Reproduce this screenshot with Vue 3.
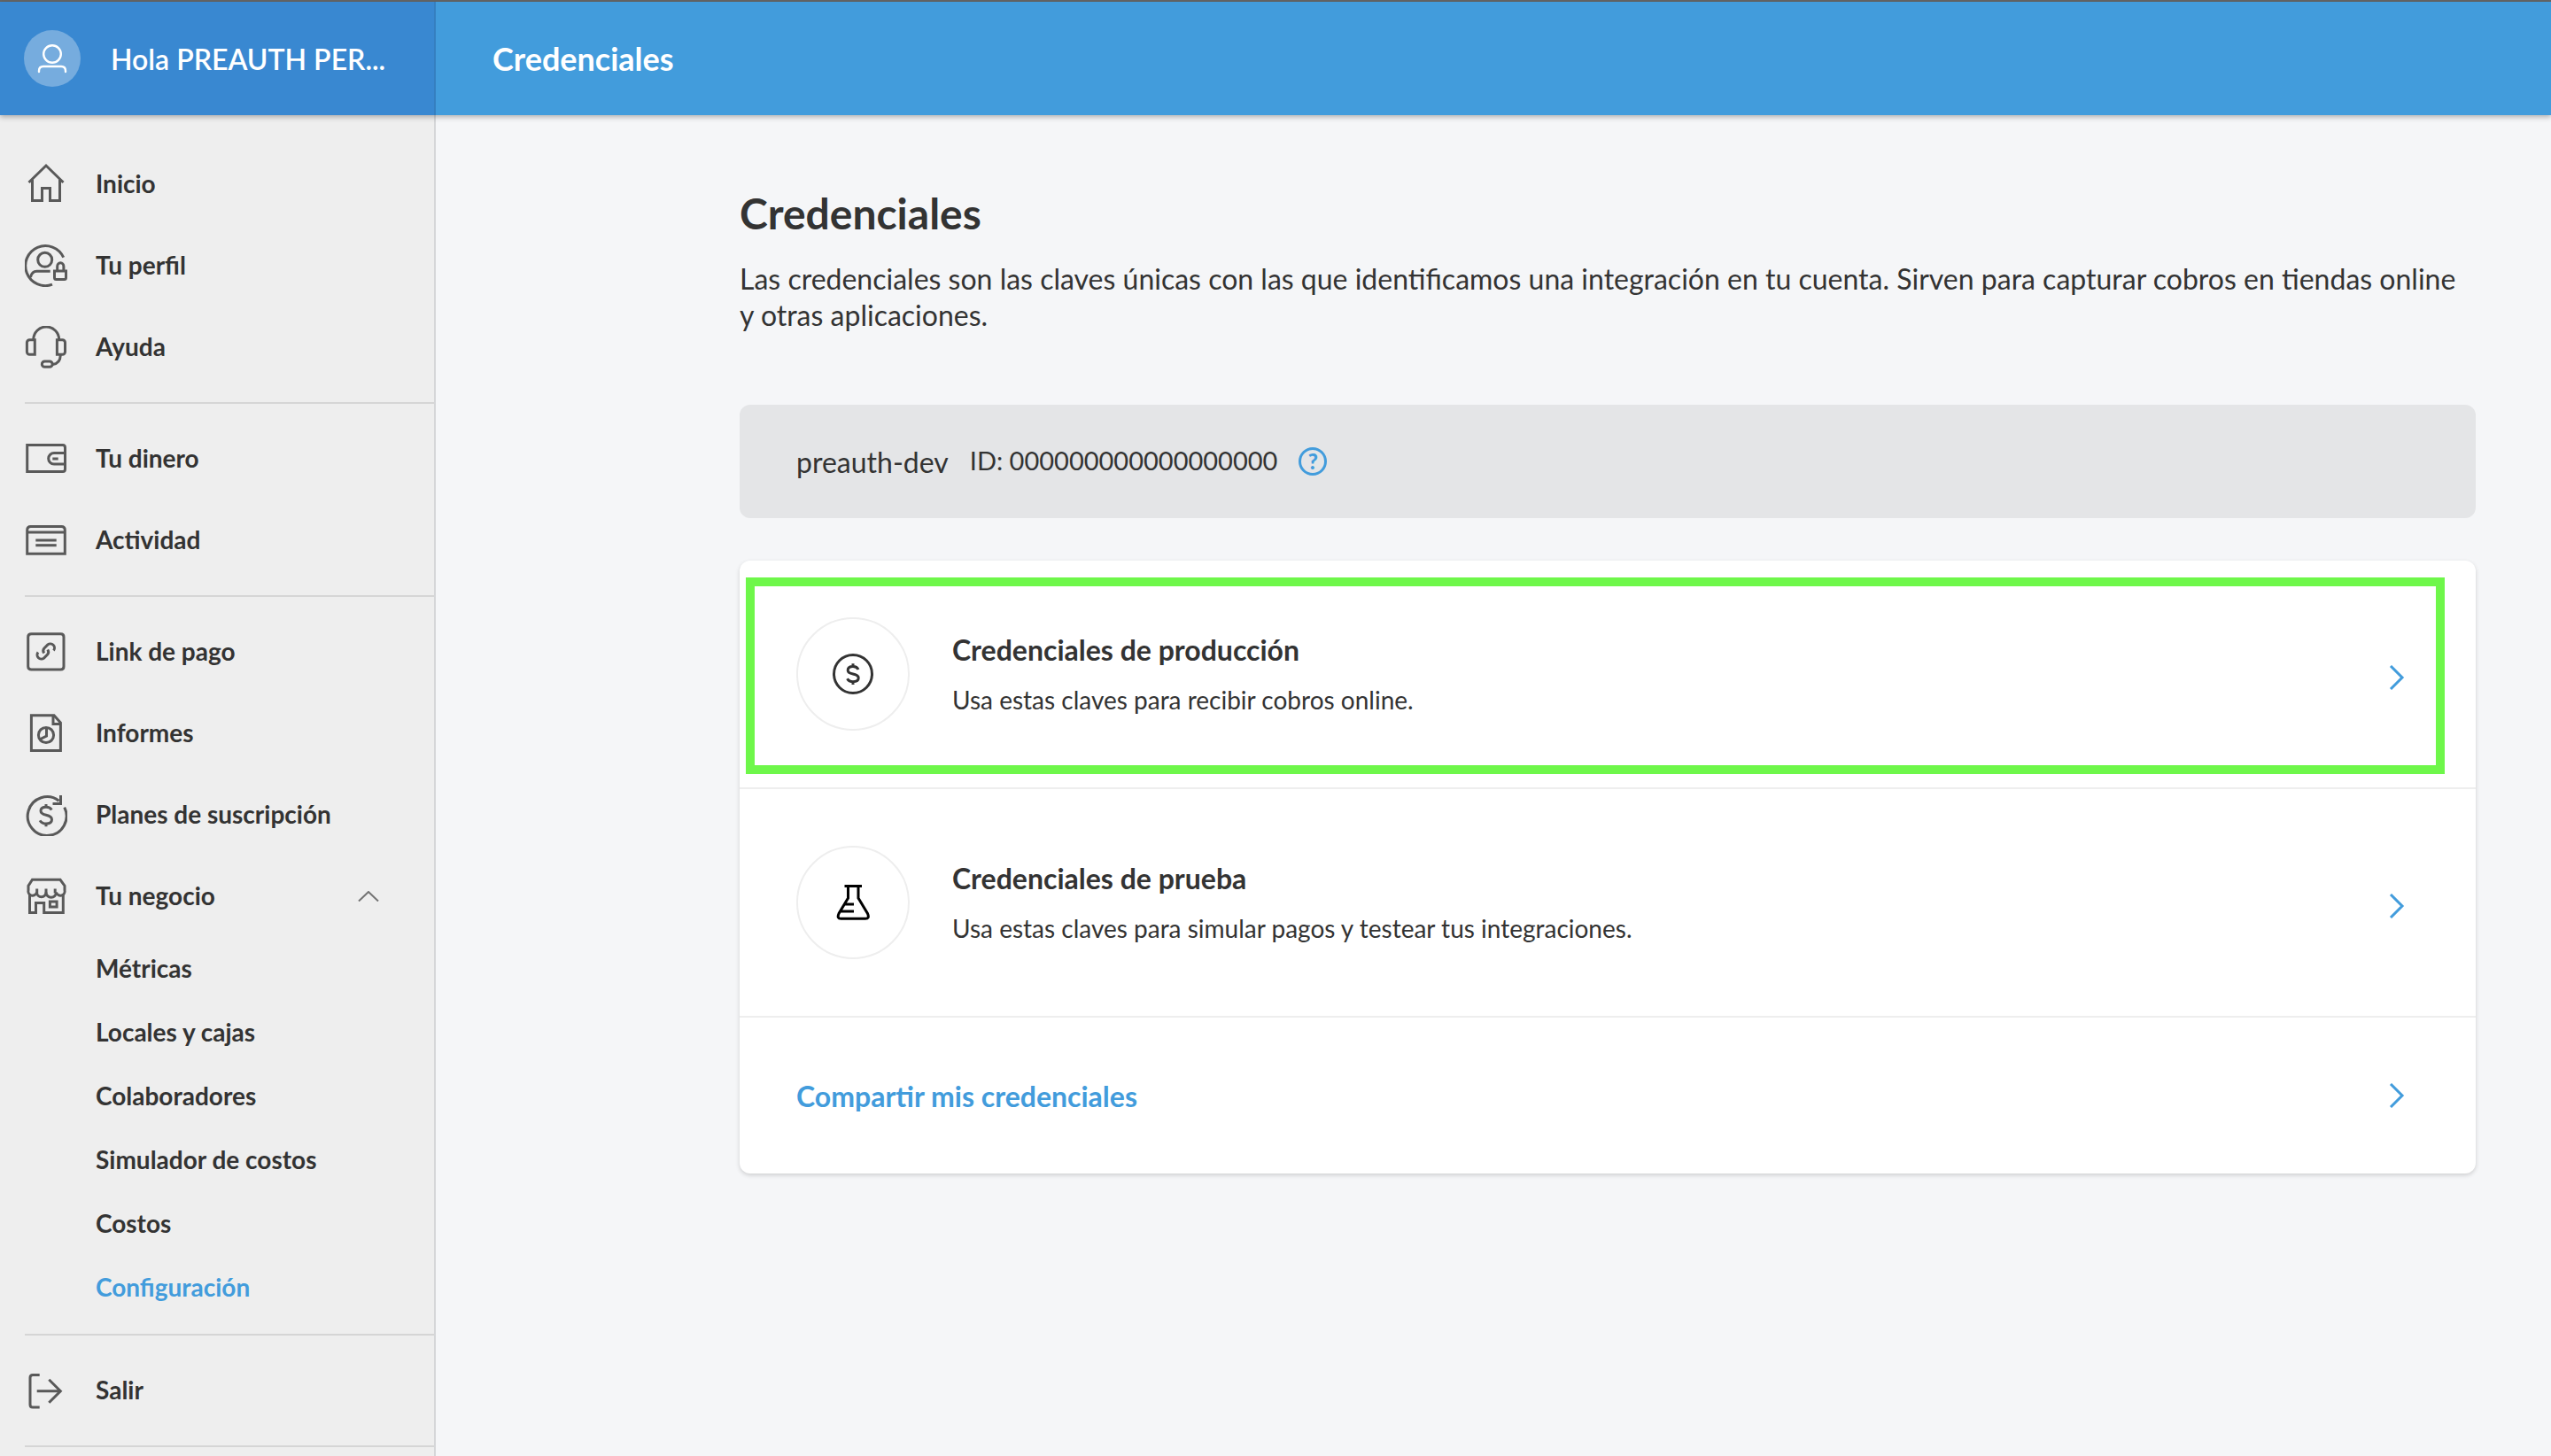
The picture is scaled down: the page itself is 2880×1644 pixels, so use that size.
<script setup>
const groups = [
  [
    { label: 'Inicio', icon: 'home' },
    { label: 'Tu perfil', icon: 'profile' },
    { label: 'Ayuda', icon: 'help' },
  ],
  [
    { label: 'Tu dinero', icon: 'wallet' },
    { label: 'Actividad', icon: 'activity' },
  ],
  [
    { label: 'Link de pago', icon: 'link' },
    { label: 'Informes', icon: 'report' },
    { label: 'Planes de suscripción', icon: 'plans' },
    {
      label: 'Tu negocio',
      icon: 'store',
      children: ['Métricas', 'Locales y cajas', 'Colaboradores', 'Simulador de costos', 'Costos', 'Configuración'],
    },
  ],
  [{ label: 'Salir', icon: 'exit' }],
]

const icons = {
  home: ['M4.5 22L24 3l19.500 19', 'M8.500 19v23.500h11v-14h9v14h11V19'],
  profile: [
    'M43.700 14.700A22.500 22.500 0 1 0 31 45.200',
    'M30.700 17.300a8 8 0 1 1-16 0a8 8 0 0 1 16 0',
    'M28.700 30.300H13.500Q8 30.300 6.500 37',
    'M33.500 30h13v7.600a2 2 0 0 1-2 2h-9a2 2 0 0 1-2-2z',
    'M36.700 30v-5a3.600 4.300 0 0 1 7.200 0v5',
  ],
  help: [
    'M9.700 15.500A14.500 14.500 0 0 1 38.700 15.500',
    'M11.300 15.700v16.600H5.400a3 3 0 0 1-3-3V18.700a3 3 0 0 1 3-3z',
    'M36.400 15.700v16.600h6.100a3 3 0 0 0 3-3V18.700a3 3 0 0 0-3-3z',
    'M40.300 33Q40 42.500 31.500 43.500',
    'M22.500 40h5.500a3 3 0 0 1 0 6.300h-5.500a3 3 0 0 1 0-6.300z',
  ],
  wallet: [
    'M2.700 8.500h40.300q2.500 0 2.500 3v24q0 3-2.500 3H2.700z',
    'M45 17.500H33a6.300 6.300 0 0 0 0 12.600H45',
    'M31.300 24h6.400',
  ],
  activity: ['M2.700 39.200V12.500q0-4 4-4h34.600q4 0 4 4v26.700z', 'M2.700 15h42.600', 'M12.300 24h23.400', 'M12.300 29.700h23.400'],
  link: [
    'M7.500 3.700h33q3.500 0 3.500 3.500v33.300q0 3.500-3.500 3.500h-33Q3.700 44 3.700 40.500V7.200q0-3.500 3.800-3.500z',
    'M32.500 22.500a4.700 4.700 0 0 0-6.600-6.600l-4 4a4.700 4.700 0 0 0-0.200 5.600',
    'M15 24.500a4.700 4.700 0 0 0 6.600 6.600l4-4a4.700 4.700 0 0 0 0.200-5.600',
  ],
  report: [
    'M7.400 3.700h25.600l7.400 8.300v31.600h-33z',
    'M32 4.500v9h8.500',
    'M32.600 26a8.600 8.600 0 1 1-17.200 0a8.600 8.600 0 0 1 17.200 0',
    'M24.500 17.500v9.500l-8 4',
  ],
  plans: [
    'M44.700 15.700A21.900 21.900 0 1 1 38.500 8.200',
    'M40.500 2v9.500h-9',
    'M30.300 18.500q-1.700-3.200-6.300-3.200q-6 0-6 4.300q0 3.400 6 4.700q6.500 1.400 6.500 5.200q0 4.500-6.500 4.500q-5 0-6.900-3.600',
    'M24 12v3.300M24 34v3.300',
  ],
  store: [
    'M8.500 5.300h31.500l5 6.900v4.800a4.900 5 0 0 1-9.500 2.500a5 5 0 0 1-11.500 0a5 5 0 0 1-10.500 0a4.900 5 0 0 1-9.500-2.500v-4.800z',
    'M13.700 15.500v5M24 15.500v5M34.200 15.500v5',
    'M5.500 21v21.500h7V31.500h9.200v11h21.600V21',
    'M28.400 30h7.700v6h-7.700z',
  ],
  exit: ['M16.700 6.500H9q-3 0-3 3V40q0 3 3 3h7.700', 'M13.700 24.700h26.500', 'M27.300 11.700l13 13l-13 13'],
}

const credentials = [
  { title: 'Credenciales de producción', text: 'Usa estas claves para recibir cobros online.', icon: 'money', highlighted: true },
  { title: 'Credenciales de prueba', text: 'Usa estas claves para simular pagos y testear tus integraciones.', icon: 'flask' },
]
</script>

<template>
  <div class="page">
    <header class="topbar">
      <a class="account" href="#">
        <svg class="avatar" viewBox="0 0 64 64" aria-hidden="true">
          <circle cx="32" cy="32" r="32" fill="#76acde" />
          <g fill="none" stroke="#fff" stroke-width="2.4" stroke-linecap="round">
            <circle cx="32" cy="27" r="9.800" />
            <path d="M17 47v-1q0-5 5-5h20q5 0 5 5v1" />
          </g>
        </svg>
        <span class="account-name">Hola PREAUTH PER...</span>
      </a>
      <div class="topbar-title">Credenciales</div>
    </header>

    <div class="body">
      <nav class="sidebar">
        <ul v-for="(group, g) in groups" :key="g" class="group">
          <li v-for="item in group" :key="item.label">
            <a class="nav-link" href="#">
              <svg class="nav-icon" viewBox="0 0 48 48" aria-hidden="true">
                <path v-for="d in icons[item.icon]" :key="d" :d="d" />
              </svg>
              <span class="nav-label">{{ item.label }}</span>
              <svg v-if="item.children" class="caret" viewBox="0 0 24 12" aria-hidden="true">
                <path d="M1 11.500L12 1l11 10.500" />
              </svg>
            </a>
            <ul v-if="item.children" class="submenu">
              <li v-for="child in item.children" :key="child">
                <a class="sub-link" :class="{ active: child === 'Configuración' }" href="#">
                  <span class="nav-label">{{ child }}</span>
                </a>
              </li>
            </ul>
          </li>
        </ul>
      </nav>

      <main class="content">
        <h1>Credenciales</h1>
        <p class="intro">
          Las credenciales son las claves únicas con las que identificamos una integración en tu cuenta. Sirven para
          capturar cobros en tiendas online y otras aplicaciones.
        </p>

        <section class="app-info">
          <span class="app-name">preauth-dev</span>
          <span class="app-id">ID: 000000000000000000</span>
          <button class="help" type="button">?</button>
        </section>

        <section class="card">
          <a v-for="c in credentials" :key="c.title" class="row" href="#">
            <span class="badge">
              <svg v-if="c.icon === 'money'" class="badge-icon money" viewBox="0 0 48 48" aria-hidden="true">
                <circle cx="24" cy="24" r="21.500" />
                <path d="M30 19q-1.500-3.400-6-3.400q-5.800 0-5.800 4.200q0 3.200 5.800 4.200q6.200 1.100 6.200 4.600q0 4.200-6.200 4.200q-4.600 0-6.400-3.500M24 12.300v3.300M24 32.800v3.300" />
              </svg>
              <svg v-else class="badge-icon flask" viewBox="0 0 48 48" aria-hidden="true">
                <path d="M14.500 5.500h19.500M18.500 5.500v13.500L8 36.500Q5.500 42.200 10.500 42.200h27.500Q43 42.200 40.500 36.500L30 19V5.500M15 26h10M10 34h15" />
              </svg>
            </span>
            <span class="row-text">
              <strong class="row-title">{{ c.title }}</strong>
              <span class="row-sub">{{ c.text }}</span>
            </span>
            <svg class="chevron" viewBox="0 0 18 28" aria-hidden="true"><path d="M2 1L15 14L2 27" /></svg>
            <span v-if="c.highlighted" class="highlight"></span>
          </a>
          <a class="row share" href="#">
            <span class="share-label">Compartir mis credenciales</span>
            <svg class="chevron" viewBox="0 0 18 28" aria-hidden="true"><path d="M2 1L15 14L2 27" /></svg>
          </a>
        </section>
      </main>
    </div>
  </div>
</template>

<style>
body {
  background: #f5f6f8;
}
</style>

<style scoped>
.page {
  display: flex;
  flex-direction: column;
  min-height: 100vh;
  box-sizing: border-box;
  border-top: 2px solid #666;
  font-family: Lato, 'Open Sans', sans-serif;
  font-size: 28px;
  color: #333;
}
a {
  color: inherit;
  text-decoration: none;
}
ul {
  list-style: none;
  margin: 0;
  padding: 0;
}
svg {
  flex: none;
}

.topbar {
  position: relative;
  z-index: 1;
  display: flex;
  height: 128px;
  background: #429cdc;
  color: #fff;
  font-weight: 700;
  box-shadow: 0 2px 6px rgba(0, 0, 0, 0.3);
}
.account {
  display: flex;
  align-items: center;
  gap: 34px;
  width: 492px;
  box-sizing: border-box;
  padding-left: 27px;
  border-right: 2px solid #357fc0;
  background: #3988d1;
}
.avatar {
  width: 64px;
  height: 64px;
}
.account-name {
  font-size: 32px;
  font-weight: 600;
  white-space: nowrap;
}
.topbar-title {
  display: flex;
  align-items: center;
  padding-left: 64px;
  font-size: 36px;
}

.body {
  display: flex;
  flex: 1;
}
.sidebar {
  width: 492px;
  box-sizing: border-box;
  flex: none;
  padding: 16px 0 8px 28px;
  border-right: 2px solid #d5d6d8;
  background: #eee;
  font-weight: 700;
}
.group {
  padding: 16px 0;
  border-bottom: 2px solid #d5d5d5;
}
.nav-link {
  display: flex;
  align-items: center;
  gap: 32px;
  height: 92px;
  padding-right: 62px;
}
.nav-icon {
  width: 48px;
  height: 48px;
  fill: none;
  stroke: #595959;
  stroke-width: 3;
}
.nav-label {
  padding-bottom: 2px;
}
.caret {
  width: 24px;
  height: 12px;
  margin-left: auto;
  fill: none;
  stroke: #737373;
  stroke-width: 2;
}
.sub-link {
  display: flex;
  align-items: center;
  height: 72px;
  padding-left: 80px;
}
.active {
  color: #429cdc;
}

.content {
  flex: 1;
  min-width: 0;
  padding: 82px 85px 80px 343px;
}
h1 {
  margin: 0 0 24px;
  font-size: 48px;
  line-height: 58px;
  font-weight: 700;
}
.intro {
  margin: 0 0 81px;
  font-size: 32px;
  line-height: 41px;
}
.app-info {
  display: flex;
  align-items: center;
  gap: 24px;
  height: 128px;
  padding: 0 64px;
  border-radius: 12px;
  background: #e4e5e7;
}
.app-name {
  font-size: 32px;
}
.app-id {
  padding-bottom: 4px;
  font-size: 29px;
}
.help {
  display: flex;
  align-items: center;
  justify-content: center;
  width: 32px;
  height: 32px;
  padding: 0;
  border: 3px solid #429cdc;
  border-radius: 50%;
  background: none;
  color: #429cdc;
  font: 900 24px/24px Lato, sans-serif;
}

.card {
  margin-top: 48px;
  border-radius: 12px;
  background: #fff;
  box-shadow: 0 2px 5px rgba(0, 0, 0, 0.16);
}
.row {
  position: relative;
  display: flex;
  align-items: center;
  gap: 48px;
  padding: 64px 80px 64px 64px;
  border-bottom: 2px solid #eee;
}
.badge {
  display: flex;
  align-items: center;
  justify-content: center;
  width: 128px;
  height: 128px;
  box-sizing: border-box;
  border: 2px solid #eee;
  border-radius: 50%;
}
.badge-icon {
  width: 48px;
  height: 48px;
  fill: none;
  stroke-width: 3;
}
.money {
  stroke: #333;
}
.flask {
  stroke: #000;
}
.row-text {
  display: flex;
  flex-direction: column;
  gap: 18px;
}
.row-title {
  font-size: 32px;
  line-height: 40px;
}
.row-sub {
  line-height: 36px;
}
.chevron {
  width: 18px;
  height: 28px;
  margin-left: auto;
  padding-top: 8px;
  fill: none;
  stroke: #429cdc;
  stroke-width: 3;
}
.share {
  height: 176px;
  box-sizing: border-box;
  padding-top: 0;
  padding-bottom: 0;
  border-bottom: 0;
}
.share .chevron {
  padding-top: 0;
}
.share-label {
  font-size: 32px;
  font-weight: 700;
  color: #429cdc;
}
.highlight {
  position: absolute;
  inset: 19px 35px 15px 7px;
  border: 10px solid #6ef74a;
  pointer-events: none;
}
</style>
